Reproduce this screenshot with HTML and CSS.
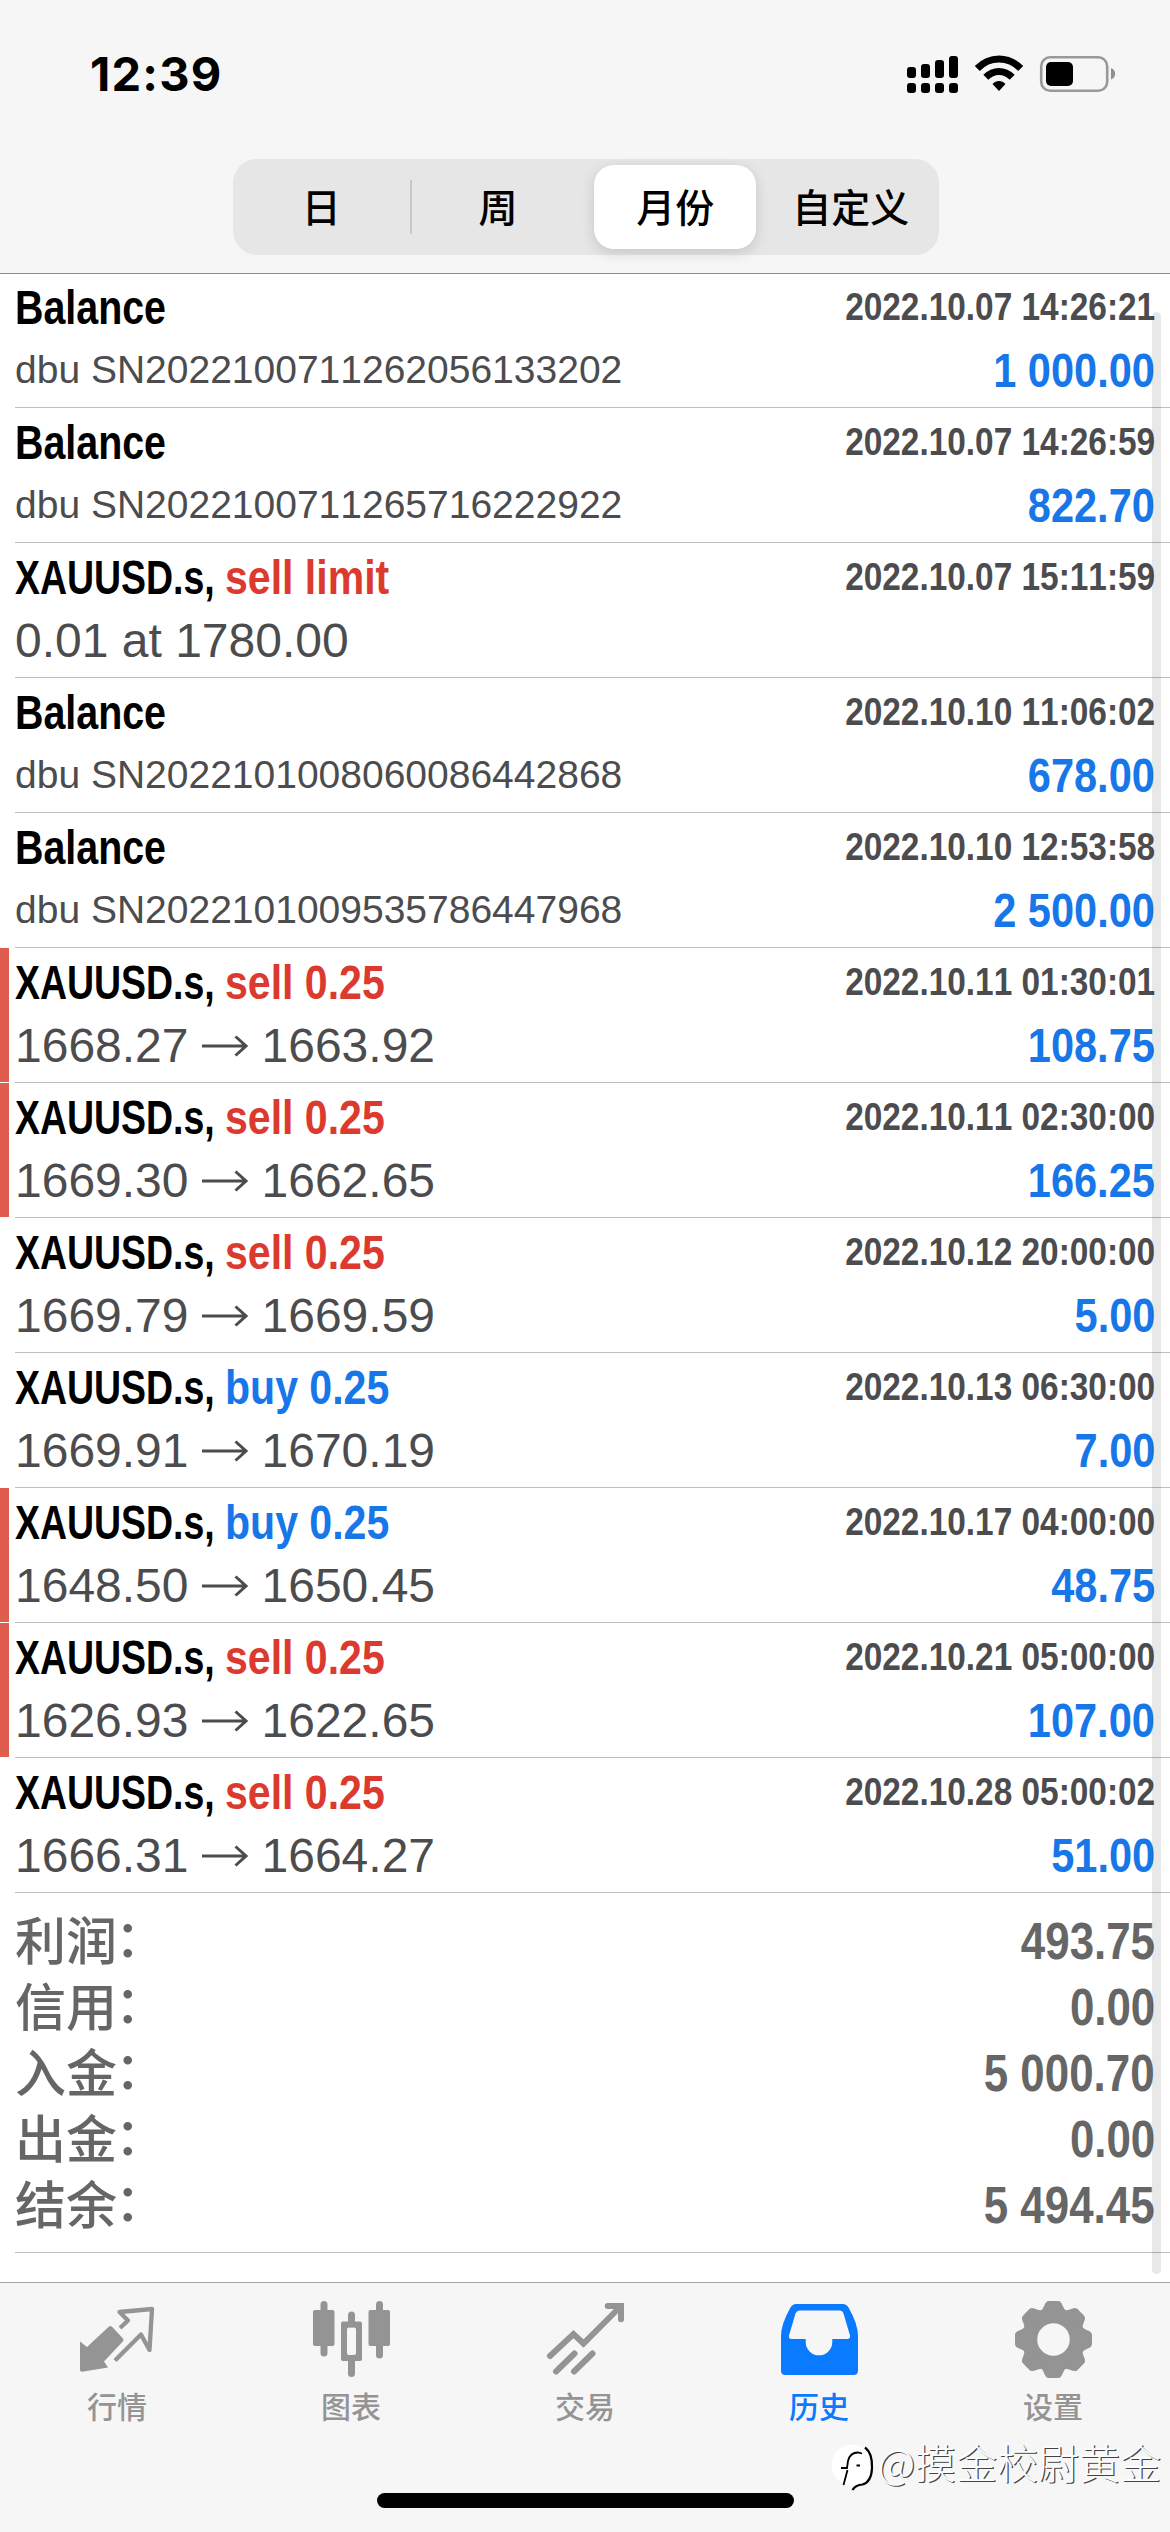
FILE: index.html
```html
<!DOCTYPE html>
<html lang="zh-CN">
<head>
<meta charset="utf-8">
<title>历史</title>
<link rel="stylesheet" href="styles.css">
</head>
<body>
<div class="app">
  <header class="header">
    <div class="status">
      <span class="clock">12:39</span>
      <svg class="status-icons" width="212" height="42" viewBox="905 53 212 42">
        <g>
          <rect x="907" y="67" width="9" height="11" rx="3"/><rect x="921" y="64" width="9" height="14" rx="3"/><rect x="935" y="60" width="9" height="18" rx="3"/><rect x="949" y="56" width="9" height="22" rx="3"/>
          <rect x="907" y="83" width="9" height="10" rx="3"/><rect x="921" y="83" width="9" height="10" rx="3"/><rect x="935" y="83" width="9" height="10" rx="3"/><rect x="949" y="83" width="9" height="10" rx="3"/>
        </g>
        <g fill="none" stroke="#000" stroke-width="7">
          <path d="M977.3 68.5C989.5 55.8 1008.500 55.8 1020.700 68.500"/>
          <path d="M985.800 77.300C993.500 69.500 1004.500 69.500 1012.200 77.300"/>
        </g>
        <path d="M992.500 84C996 80 1002 80 1005.500 84L999 91Z"/>
        <rect x="1041.200" y="57.200" width="66" height="33.600" rx="9" fill="none" stroke="#999" stroke-width="2.600"/>
        <rect x="1046" y="62" width="27" height="24" rx="5"/>
        <path d="M1111 68C1116.500 70 1116.500 77.500 1111 79.500Z" fill="#8f8f8f"/>
      </svg>
    </div>
    <nav class="segments">
      <span class="segment">日</span>
      <span class="segment divided">周</span>
      <span class="segment selected">月份</span>
      <span class="segment">自定义</span>
    </nav>
  </header>

  <main class="history">
    <div class="row"><i class="mark"></i><div class="deal"><div class="info"><div class="title"><b class="kind">Balance</b></div><div class="comment">dbu SN2022100711262056133202</div></div><div class="figures"><b class="time">2022.10.07 14:26:21</b><b class="profit">1 000.00</b></div></div></div>
    <div class="row"><i class="mark"></i><div class="deal"><div class="info"><div class="title"><b class="kind">Balance</b></div><div class="comment">dbu SN2022100711265716222922</div></div><div class="figures"><b class="time">2022.10.07 14:26:59</b><b class="profit">822.70</b></div></div></div>
    <div class="row"><i class="mark"></i><div class="deal"><div class="info"><div class="title"><b class="symbol">XAUUSD.s,</b><b class="action sell">sell limit</b></div><div class="price">0.01 at 1780.00</div></div><div class="figures"><b class="time">2022.10.07 15:11:59</b></div></div></div>
    <div class="row"><i class="mark"></i><div class="deal"><div class="info"><div class="title"><b class="kind">Balance</b></div><div class="comment">dbu SN2022101008060086442868</div></div><div class="figures"><b class="time">2022.10.10 11:06:02</b><b class="profit">678.00</b></div></div></div>
    <div class="row"><i class="mark"></i><div class="deal"><div class="info"><div class="title"><b class="kind">Balance</b></div><div class="comment">dbu SN2022101009535786447968</div></div><div class="figures"><b class="time">2022.10.10 12:53:58</b><b class="profit">2 500.00</b></div></div></div>
    <div class="row"><i class="mark stop"></i><div class="deal"><div class="info"><div class="title"><b class="symbol">XAUUSD.s,</b><b class="action sell">sell 0.25</b></div><div class="price">1668.27<svg class="arrow" viewBox="0 0 46 22"><path d="M0 11H44M33.500 1.500L44 11L33.500 20.500"/></svg>1663.92</div></div><div class="figures"><b class="time">2022.10.11 01:30:01</b><b class="profit">108.75</b></div></div></div>
    <div class="row"><i class="mark stop"></i><div class="deal"><div class="info"><div class="title"><b class="symbol">XAUUSD.s,</b><b class="action sell">sell 0.25</b></div><div class="price">1669.30<svg class="arrow" viewBox="0 0 46 22"><path d="M0 11H44M33.500 1.500L44 11L33.500 20.500"/></svg>1662.65</div></div><div class="figures"><b class="time">2022.10.11 02:30:00</b><b class="profit">166.25</b></div></div></div>
    <div class="row"><i class="mark"></i><div class="deal"><div class="info"><div class="title"><b class="symbol">XAUUSD.s,</b><b class="action sell">sell 0.25</b></div><div class="price">1669.79<svg class="arrow" viewBox="0 0 46 22"><path d="M0 11H44M33.500 1.500L44 11L33.500 20.500"/></svg>1669.59</div></div><div class="figures"><b class="time">2022.10.12 20:00:00</b><b class="profit">5.00</b></div></div></div>
    <div class="row"><i class="mark"></i><div class="deal"><div class="info"><div class="title"><b class="symbol">XAUUSD.s,</b><b class="action buy">buy 0.25</b></div><div class="price">1669.91<svg class="arrow" viewBox="0 0 46 22"><path d="M0 11H44M33.500 1.500L44 11L33.500 20.500"/></svg>1670.19</div></div><div class="figures"><b class="time">2022.10.13 06:30:00</b><b class="profit">7.00</b></div></div></div>
    <div class="row"><i class="mark stop"></i><div class="deal"><div class="info"><div class="title"><b class="symbol">XAUUSD.s,</b><b class="action buy">buy 0.25</b></div><div class="price">1648.50<svg class="arrow" viewBox="0 0 46 22"><path d="M0 11H44M33.500 1.500L44 11L33.500 20.500"/></svg>1650.45</div></div><div class="figures"><b class="time">2022.10.17 04:00:00</b><b class="profit">48.75</b></div></div></div>
    <div class="row"><i class="mark stop"></i><div class="deal"><div class="info"><div class="title"><b class="symbol">XAUUSD.s,</b><b class="action sell">sell 0.25</b></div><div class="price">1626.93<svg class="arrow" viewBox="0 0 46 22"><path d="M0 11H44M33.500 1.500L44 11L33.500 20.500"/></svg>1622.65</div></div><div class="figures"><b class="time">2022.10.21 05:00:00</b><b class="profit">107.00</b></div></div></div>
    <div class="row"><i class="mark"></i><div class="deal"><div class="info"><div class="title"><b class="symbol">XAUUSD.s,</b><b class="action sell">sell 0.25</b></div><div class="price">1666.31<svg class="arrow" viewBox="0 0 46 22"><path d="M0 11H44M33.500 1.500L44 11L33.500 20.500"/></svg>1664.27</div></div><div class="figures"><b class="time">2022.10.28 05:00:02</b><b class="profit">51.00</b></div></div></div>
    <dl class="summary">
      <div class="total"><dt>利润<span class="colon">：</span></dt><dd>493.75</dd></div>
      <div class="total"><dt>信用<span class="colon">：</span></dt><dd>0.00</dd></div>
      <div class="total"><dt>入金<span class="colon">：</span></dt><dd>5 000.70</dd></div>
      <div class="total"><dt>出金<span class="colon">：</span></dt><dd>0.00</dd></div>
      <div class="total"><dt>结余<span class="colon">：</span></dt><dd>5 494.45</dd></div>
    </dl>
    <div class="scrollbar"></div>
  </main>

  <footer class="tabbar">
    <div class="tab">
      <svg class="icon" viewBox="67 2295 100 86"><path fill="currentColor" d="M80 2341.500L87 2347L109 2326.500Q110.500 2325.200 112 2326.700L123 2338.500Q124 2340 123 2341.300L104 2361.500L108 2367.500L82 2371.700Q80 2371.700 80 2370Z"/><path fill="none" stroke="currentColor" stroke-width="4.300" d="M120 2328L128 2320.500L119.500 2312L152 2309L149.500 2350L141 2334.500L115 2360.500" stroke-linejoin="round"/></svg>
      <span>行情</span>
    </div>
    <div class="tab">
      <svg class="icon" viewBox="301 2295 100 86"><g fill="currentColor"><rect x="313" y="2310" width="21.500" height="36" rx="2"/><rect x="320.500" y="2301" width="7" height="55.500" rx="3.500"/><rect x="368.500" y="2310" width="21.500" height="36" rx="2"/><rect x="376" y="2301" width="7" height="57.500" rx="3.500"/><rect x="348" y="2311.500" width="7" height="16" rx="3.500"/><rect x="348" y="2357" width="7" height="20" rx="3.500"/><path fill-rule="evenodd" d="M343 2321.500H360Q362 2321.500 362 2323.500V2359Q362 2361 360 2361H343Q341 2361 341 2359V2323.500Q341 2321.500 343 2321.500ZM349 2327.500Q347 2327.500 347 2329.500V2353Q347 2355 349 2355H354Q356 2355 356 2353V2329.500Q356 2327.500 354 2327.500Z"/></g></svg>
      <span>图表</span>
    </div>
    <div class="tab">
      <svg class="icon" viewBox="535 2295 100 86"><path fill="none" stroke="currentColor" stroke-width="6" stroke-linecap="round" d="M550 2356L573.500 2334L583.500 2343.500L620 2307M574.500 2353.500L556 2371.500M592.500 2353.500L574 2371.500"/><path fill="none" stroke="currentColor" stroke-width="6" stroke-linecap="round" d="M607.700 2306H621V2319.300"/></svg>
      <span>交易</span>
    </div>
    <div class="tab active">
      <svg class="icon" viewBox="769 2295 100 86"><path fill="currentColor" fill-rule="evenodd" d="M796 2304H843Q846.500 2304 848.500 2307.500Q858 2324 858 2336V2370.500Q858 2375 853.500 2375H785.500Q781 2375 781 2370.500V2336Q781 2324 790.500 2307.500Q792.500 2304 796 2304ZM800 2310.500Q797 2310.500 795.500 2313.500L789 2335.500Q788.500 2339 791.500 2339H805.700V2342A13.300 13.300 0 0 0 832.300 2342V2339H847Q850.500 2339 850 2335.500L843.500 2313.500Q842.500 2310.500 839.500 2310.500Z"/></svg>
      <span>历史</span>
    </div>
    <div class="tab">
      <svg class="icon" viewBox="1003 2295 100 86"><g transform="translate(1053.500 2339.500)" fill="currentColor"><circle r="23.500" fill="none" stroke="currentColor" stroke-width="14.500"/>
        <path id="tooth" d="M-13.500 -28C-8.500 -31 -9.500 -38.500 -4.500 -38.500H4.500C9.500 -38.500 8.500 -31 13.500 -28L10 -24H-10Z"/>
        <use href="#tooth" transform="rotate(45)"/><use href="#tooth" transform="rotate(90)"/><use href="#tooth" transform="rotate(135)"/><use href="#tooth" transform="rotate(180)"/><use href="#tooth" transform="rotate(225)"/><use href="#tooth" transform="rotate(270)"/><use href="#tooth" transform="rotate(315)"/></g></svg>
      <span>设置</span>
    </div>
  </footer>
  <div class="home-indicator"></div>
  <div class="watermark">
    <svg width="48" height="52" viewBox="824 2442 48 52"><circle cx="846" cy="2467" r="20.500" fill="#fff"/><g fill="none" stroke="#000" stroke-width="1.800"><path d="M837.500 2487L841.500 2472M835 2470H841L842 2463Q844 2454.500 852 2454.500L856 2455.500M850.500 2467.500H854"/><path d="M859 2449.500Q866.500 2455 866 2470Q865.500 2484 856.500 2486.500Q849.500 2487 846.500 2492" stroke-width="2.200"/></g></svg>
    <span>@摸金校尉黄金</span>
  </div>
</div>
</body>
</html>
```
FILE: styles.css
```css
* { box-sizing: border-box; }

body {
  margin: 0;
  background: #fff;
  font-family: "Liberation Sans", "Noto Sans CJK SC", sans-serif;
  font-kerning: none;
}

.app {
  position: relative;
  display: flex;
  flex-direction: column;
  width: 1170px;
  height: 2532px;
  overflow: hidden;
}

/* Top bar */
.header {
  position: relative;
  z-index: 1;
  height: 273px;
  background: #f6f6f6;
  box-shadow: 0 1px 0 #8c8c8e;
}

.status {
  display: flex;
  justify-content: space-between;
  align-items: center;
  height: 148px;
  padding: 0 53px 0 90px;
}

.clock {
  font: 700 47px/60px Inter, sans-serif;
  letter-spacing: 1.2px;
}

.segments {
  display: flex;
  width: 706px;
  height: 96px;
  margin: 11px 0 0 233px;
  padding: 6px 0;
  border-radius: 24px;
  background: #e6e6e7;
}

.segment {
  flex: 1;
  font: 500 39px/80px "Noto Sans CJK SC", sans-serif;
  text-align: center;
}

.divided {
  background: linear-gradient(#c8c8ca, #c8c8ca) 0 15px / 2px 54px no-repeat;
}

.selected {
  flex: 0 0 162px;
  margin: 0 6px 0 8px;
  border-radius: 20px;
  background: #fff;
  box-shadow: 0 4px 14px rgba(0, 0, 0, 0.14);
}

/* Deals */
.history {
  position: relative;
  height: 2009px;
}

.row {
  display: flex;
  gap: 6px;
  height: 135px;
}

.mark {
  width: 9px;
  height: 134px;
}

.stop { background: #e05d4e; }

.deal {
  flex: 1;
  display: flex;
  justify-content: space-between;
  padding: 0 15px 0 0;
  border-bottom: 1px solid #bfbfc1;
}

.title {
  display: flex;
  height: 68px;
  font-size: 48px;
  line-height: 69px;
  white-space: nowrap;
}

.kind { transform: scaleX(0.82); transform-origin: left; }

.symbol {
  width: 210px;
  transform: scaleX(0.78);
  transform-origin: left;
}

.action { transform: scaleX(0.855); transform-origin: left; }

.sell { color: #dc3a2e; }

.buy { color: #1877e8; }

.comment {
  color: #4c4c4e;
  font-size: 39px;
  line-height: 57px;
}

.price {
  display: flex;
  align-items: center;
  color: #4c4c4e;
  font-size: 48px;
  line-height: 60px;
}

.arrow {
  width: 46px;
  height: 22px;
  margin: 0 14px 0 13px;
  fill: none;
  stroke: #4c4c4e;
  stroke-width: 3;
}

.figures {
  display: flex;
  flex-direction: column;
  align-items: flex-end;
}

.time {
  color: #4c4c4e;
  font-size: 39px;
  line-height: 68px;
  transform: scaleX(0.856);
  transform-origin: right;
}

.profit {
  color: #1877e8;
  font-size: 48px;
  line-height: 60px;
  transform: scaleX(0.865);
  transform-origin: right;
}

/* Totals */
.summary {
  height: 360px;
  margin: 0 0 0 15px;
  padding: 14px 15px 0 0;
  border-bottom: 1px solid #bfbfc1;
}

.total {
  display: flex;
  justify-content: space-between;
  height: 66px;
  color: #666;
}

.total dt {
  font: 500 51px/62px "Noto Sans CJK SC", sans-serif;
}

.colon {
  display: inline-block;
  transform: translate(-2px, -3px);
}

.total dd {
  margin: 0;
  font-size: 51px;
  font-weight: 700;
  line-height: 70px;
  transform: scaleX(0.86);
  transform-origin: right;
}

.scrollbar {
  position: absolute;
  top: 39px;
  right: 9px;
  width: 9px;
  height: 1962px;
  border-radius: 5px;
  background: rgba(0, 0, 0, 0.09);
}

/* Tab bar */
.tabbar {
  display: flex;
  height: 250px;
  border-top: 1px solid #a8a8aa;
  background: #f6f6f6;
}

.tab {
  flex: 1;
  display: flex;
  flex-direction: column;
  align-items: center;
  gap: 4px;
  padding-top: 12px;
  color: #949494;
  font: 500 30px/40px "Noto Sans CJK SC", sans-serif;
}

.active { color: #0a7aff; }

.icon {
  width: 100px;
  height: 86px;
}

.home-indicator {
  position: absolute;
  left: 377px;
  bottom: 24px;
  width: 417px;
  height: 15px;
  border-radius: 8px;
  background: #000;
}

.watermark {
  position: absolute;
  right: 9px;
  bottom: 40px;
  display: flex;
  align-items: flex-start;
  color: #fcfcfc;
  font: 300 41px/42px "Noto Sans CJK SC", sans-serif;
  text-shadow: 1.300px 1.300px 0.500px #444;
}
```
